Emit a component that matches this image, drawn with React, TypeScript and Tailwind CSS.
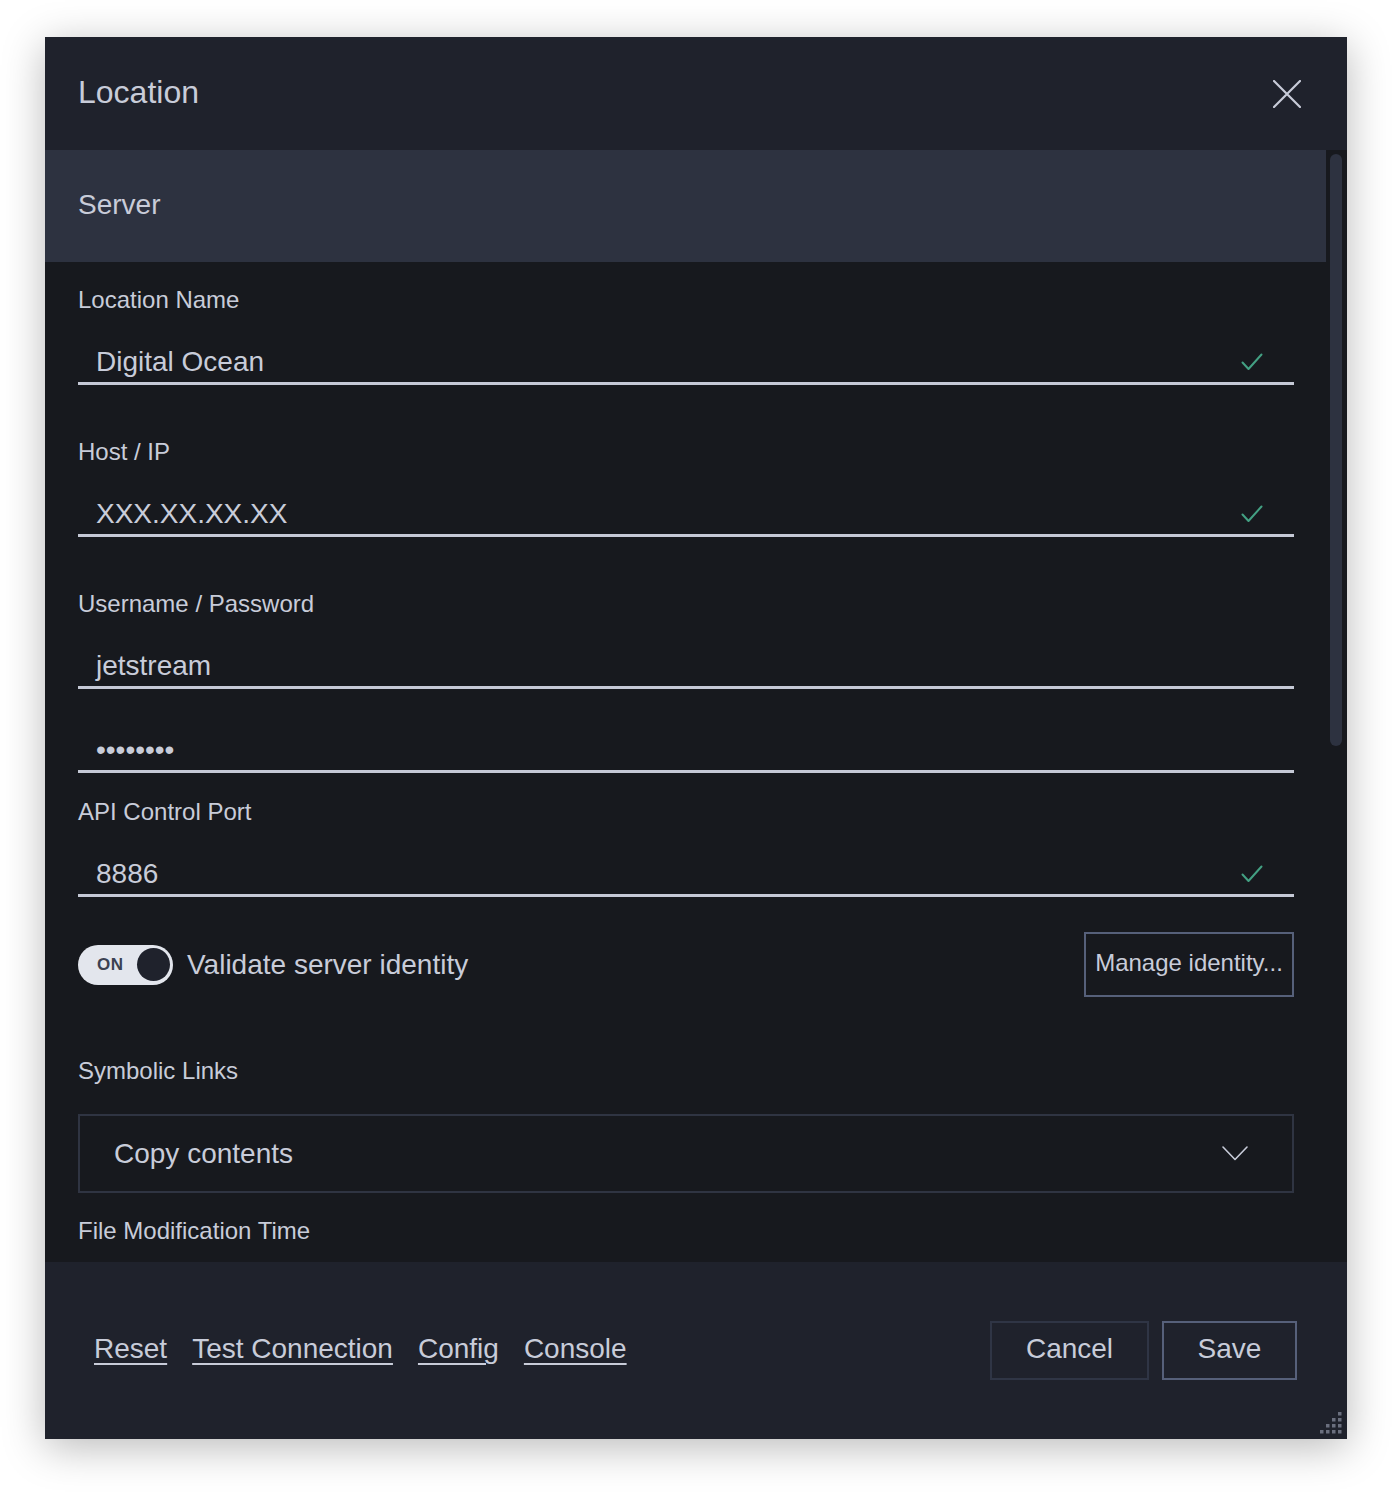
import React from 'react';

const font = { fontFamily: '"Liberation Sans", Arial, Helvetica, sans-serif' };

function Check() {
  return (
    <svg width="22" height="18" viewBox="0 0 22 18" fill="none" className="shrink-0">
      <path d="M1.5 9.5 L7.5 16 L20.5 1.5" stroke="#43a083" strokeWidth="2" strokeLinecap="round" strokeLinejoin="round" />
    </svg>
  );
}

function Label({ children, className = '' }: { children: React.ReactNode; className?: string }) {
  return <div className={`text-[24px] leading-[28px] text-[#c8ccd9] ${className}`}>{children}</div>;
}

function Field({ value, valid, className = '' }: { value: string; valid?: boolean; className?: string }) {
  return (
    <div className={`h-[47px] border-b-[3px] border-[#c5c9d6] flex items-center justify-between pt-[3px] pl-[18px] pr-[31px] ${className}`}>
      <span className="text-[28px] leading-[34px] text-[#c8ccd9]">{value}</span>
      {valid && <Check />}
    </div>
  );
}

function ResizeGrip() {
  const dots: [number, number][] = [];
  for (let r = 0; r < 4; r++) {
    for (let c = 3 - r; c < 4; c++) dots.push([c, r]);
  }
  return (
    <svg width="24" height="24" viewBox="0 0 24 24" className="absolute right-[3px] bottom-[3px]">
      {dots.map(([c, r]) => (
        <rect key={`${c}-${r}`} x={c * 6} y={r * 6} width="3.5" height="3.5" fill="#6a6f7e" />
      ))}
    </svg>
  );
}

export default function App() {
  return (
    <div className="min-h-screen bg-white pt-[37px] pl-[45px]" style={font}>
      <div className="relative w-[1302px] h-[1402px] flex flex-col shadow-[0_8px_40px_rgba(0,0,0,0.28)]">
        {/* Header */}
        <div className="h-[113px] shrink-0 bg-[#1f222c] flex items-center justify-between pl-[33px] pr-[46px]">
          <h1 className="text-[32px] text-[#c8ccd9] -mt-[4px]">Location</h1>
          <svg width="28" height="28" viewBox="0 0 28 28" fill="none">
            <path d="M1 1 L27 27 M27 1 L1 27" stroke="#c8ccd9" strokeWidth="2.2" strokeLinecap="round" />
          </svg>
        </div>

        {/* Scroll area */}
        <div className="h-[1112px] shrink-0 flex bg-[#17191e] overflow-hidden">
          <div className="flex-1 flex flex-col overflow-hidden">
            <div className="h-[112px] shrink-0 bg-[#2d3240] flex items-center pl-[33px]">
              <span className="text-[28px] text-[#c8ccd9] -mt-[2px]">Server</span>
            </div>

            <div className="flex flex-col pl-[33px] pr-[32px] pt-[24px]">
              <Label>Location Name</Label>
              <Field value="Digital Ocean" valid className="mt-[24px]" />

              <Label className="mt-[53px]">Host / IP</Label>
              <Field value="XXX.XX.XX.XX" valid className="mt-[24px]" />

              <Label className="mt-[53px]">Username / Password</Label>
              <Field value="jetstream" className="mt-[24px]" />
              <Field value="••••••••" className="mt-[37px]" />

              <Label className="mt-[25px]">API Control Port</Label>
              <Field value="8886" valid className="mt-[24px]" />

              <div className="mt-[35px] h-[65px] flex items-center justify-between">
                <div className="flex items-center gap-[14px]">
                  <div className="w-[95px] h-[40px] rounded-full bg-[#e3e6ed] flex items-center justify-between pl-[19px] pr-[3px]">
                    <span className="text-[17px] font-bold text-[#3b4152] tracking-[0.5px]">ON</span>
                    <div className="w-[33px] h-[33px] rounded-full bg-[#1f222c]" />
                  </div>
                  <span className="text-[28px] text-[#c8ccd9]">Validate server identity</span>
                </div>
                <button className="h-[65px] w-[210px] border-2 border-[#56607a] text-[24px] text-[#c8ccd9] flex items-center justify-center pb-[3px]">
                  Manage identity...
                </button>
              </div>

              <Label className="mt-[60px]">Symbolic Links</Label>
              <div className="mt-[29px] h-[79px] border-2 border-[#2f3442] flex items-center justify-between pl-[34px] pr-[44px]">
                <span className="text-[28px] text-[#c8ccd9]">Copy contents</span>
                <svg width="26" height="15" viewBox="0 0 26 15" fill="none">
                  <path d="M1 1 L13 13.5 L25 1" stroke="#c8ccd9" strokeWidth="1.6" strokeLinecap="round" strokeLinejoin="round" />
                </svg>
              </div>

              <Label className="mt-[24px]">File Modification Time</Label>
            </div>
          </div>

          {/* Scrollbar */}
          <div className="w-[21px] shrink-0 pt-[4px] pl-[4px] pr-[5px]">
            <div className="h-[592px] rounded-full bg-[#2d3240]" />
          </div>
        </div>

        {/* Footer */}
        <div className="flex-1 bg-[#1f222c] flex items-center justify-between pl-[49px] pr-[50px]">
          <div className="flex items-center gap-[25px] text-[28px] text-[#c8ccd9] -mt-[3px]">
            <a className="underline underline-offset-[5px] decoration-[1.5px]">Reset</a>
            <a className="underline underline-offset-[5px] decoration-[1.5px]">Test Connection</a>
            <a className="underline underline-offset-[5px] decoration-[1.5px]">Config</a>
            <a className="underline underline-offset-[5px] decoration-[1.5px]">Console</a>
          </div>
          <div className="flex items-center gap-[13px]">
            <button className="w-[159px] h-[59px] border-2 border-[#2f3545] text-[28px] text-[#c8ccd9] pb-[3px]">Cancel</button>
            <button className="w-[135px] h-[59px] border-2 border-[#56607a] text-[28px] text-[#c8ccd9] pb-[3px]">Save</button>
          </div>
        </div>

        <ResizeGrip />
      </div>
    </div>
  );
}
